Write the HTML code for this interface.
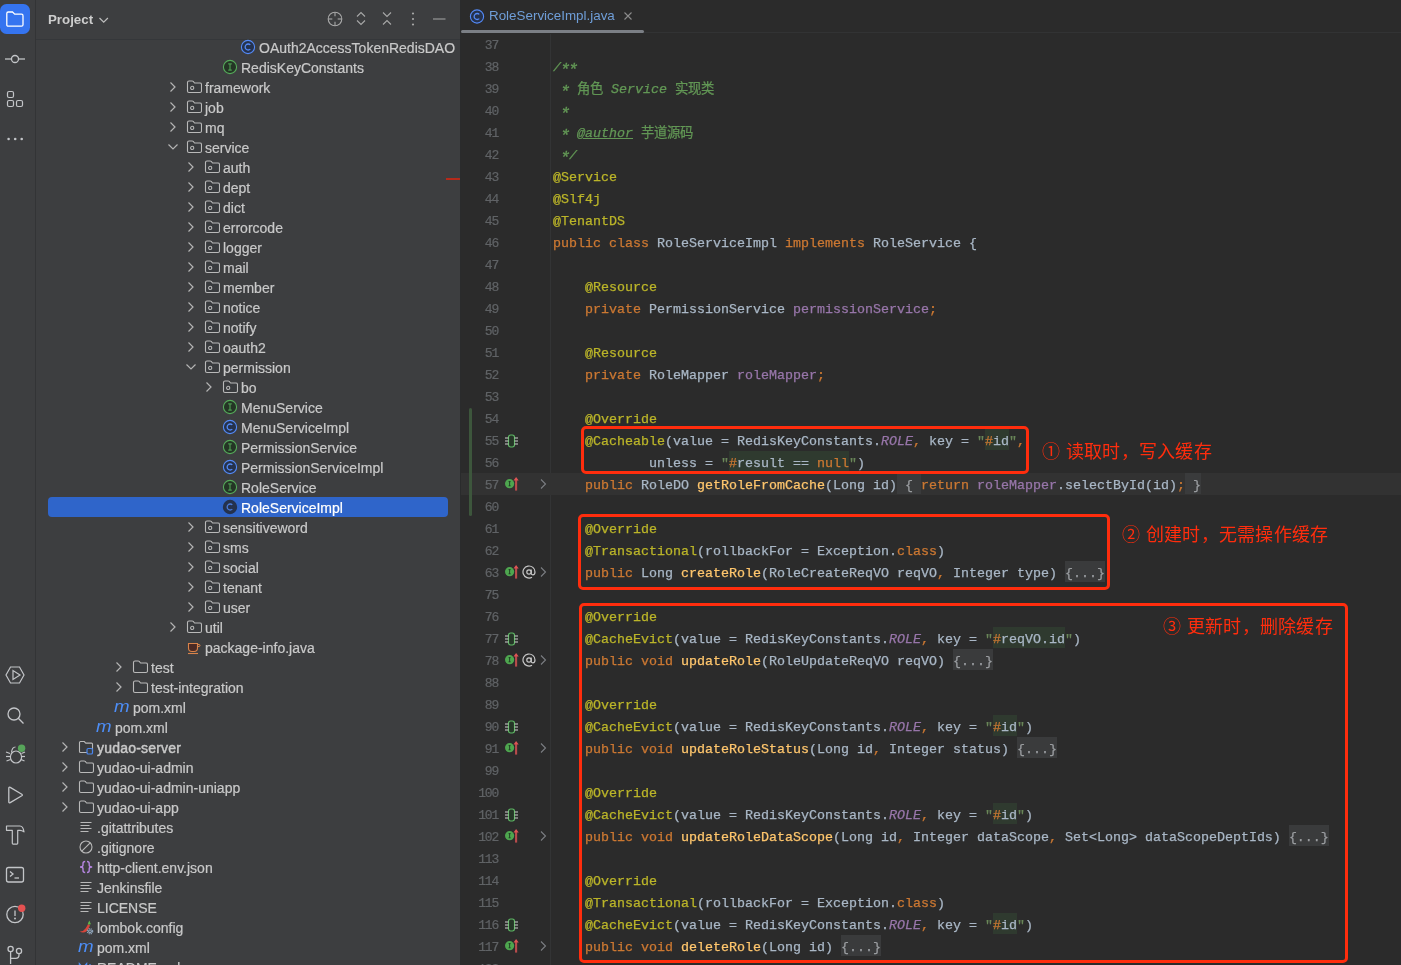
<!DOCTYPE html><html lang="zh-CN"><head><meta charset="utf-8"><style>
*{margin:0;padding:0;box-sizing:border-box}
html,body{width:1401px;height:965px;overflow:hidden;background:#2b2b2b}
body{position:relative;font-family:"Liberation Sans",sans-serif}
#panel,#editor,#strip,.note{will-change:transform}
.abs{position:absolute}
#strip{position:absolute;left:0;top:0;width:35px;height:965px;background:#3d3e40}
#strip .sep{position:absolute;left:35px;top:0;width:1px;height:965px;background:#333436}
#panel{position:absolute;left:36px;top:0;width:424px;height:965px;background:#3d3e40;overflow:hidden}
#psep{position:absolute;left:460px;top:0;width:1px;height:965px;background:#2a2b2c}
#editor{position:absolute;left:461px;top:0;width:940px;height:965px;background:#2b2b2b;overflow:hidden}
.row{position:absolute;left:0;width:424px;height:20px;line-height:20px;font-size:14px;color:#c9c9c9;white-space:nowrap;-webkit-text-stroke:0.2px currentColor}
.row .t{position:absolute;top:0}
.row svg{position:absolute}
.code{position:absolute;left:92px;height:22px;line-height:22px;font-family:"Liberation Mono",monospace;font-size:13.333px;color:#a9b7c6;white-space:pre;-webkit-text-stroke:0.25px currentColor}
.ln{position:absolute;left:0;width:37px;letter-spacing:-1.2px;text-align:right;height:22px;line-height:22px;font-family:"Liberation Mono",monospace;font-size:13px;color:#606366;-webkit-text-stroke:0.2px currentColor}
.kw{color:#cc7832}.an{color:#bbb529}.st{color:#6a8759}.dc{color:#629755;font-style:italic}
.fd{color:#9876aa}.sf{color:#9876aa;font-style:italic}.md{color:#ffc66d}
.inj{background:#2f3a2f;padding:5.45px 0 1.45px}
.cj{font-style:normal!important}
.ast{display:inline-block;transform:translateY(2.6px) scale(1.3)}
.fold{background:#3a3b3c;color:#9a9da0;padding:5.45px 0 1.45px}
.box{position:absolute;border:3.5px solid #ff2d0d;border-radius:5px}
.note{position:absolute;color:#ff2d0d;font-size:18px;letter-spacing:0.3px;line-height:22px;white-space:nowrap}
</style></head><body>

<div id="strip"><div class="sep"></div>
<svg class="abs" style="left:0;top:0" width="35" height="965" viewBox="0 0 35 965">
<rect x="0" y="4" width="30" height="30" rx="6.5" fill="#3574f0"/>
<path d="M6.8 13.5 q0-1.5 1.5-1.5 h4.2 l2.2 2.2 h6.8 q1.5 0 1.5 1.5 v9 q0 1.5-1.5 1.5 h-13.2 q-1.5 0-1.5-1.5z" fill="none" stroke="#fff" stroke-width="1.3"/>
<g fill="none" stroke="#c3c5c8" stroke-width="1.3"><line x1="5" y1="59" x2="11.5" y2="59"/><line x1="18.5" y1="59" x2="25" y2="59"/><circle cx="15" cy="59" r="3.5"/></g>
<g fill="none" stroke="#c3c5c8" stroke-width="1.2"><rect x="7.5" y="91.5" width="6" height="6" rx="1.5"/><rect x="7.5" y="100.5" width="6" height="6" rx="1.5"/><rect x="16.5" y="100.5" width="6" height="6" rx="1.5"/></g>
<g fill="#c3c5c8"><circle cx="8.6" cy="139" r="1.3"/><circle cx="15.2" cy="139" r="1.3"/><circle cx="21.7" cy="139" r="1.3"/></g>
<g fill="none" stroke="#c3c5c8" stroke-width="1.2"><path d="M10.5 667 h9 l4.5 8 l-4.5 8 h-9 l-4.5 -8z"/><path d="M13 670.5 v9 l7 -4.5z"/></g>
<g fill="none" stroke="#c3c5c8" stroke-width="1.3"><circle cx="14" cy="714" r="6"/><line x1="18.3" y1="718.3" x2="23.5" y2="723.5"/></g>
<g fill="none" stroke="#c3c5c8" stroke-width="1.2"><ellipse cx="16" cy="757" rx="5.6" ry="6"/><path d="M11.5 752.5 q0.5 -5.5 4 -5.5"/><line x1="6" y1="752" x2="10" y2="753.5"/><line x1="6" y1="756.5" x2="10.3" y2="756.5"/><line x1="6.5" y1="761" x2="10.5" y2="759.5"/><line x1="25" y1="752" x2="21.5" y2="753.5"/><line x1="25" y1="756.5" x2="21.8" y2="756.5"/><line x1="24.5" y1="761" x2="21" y2="759.5"/></g><circle cx="21.6" cy="748.3" r="3.7" fill="#57a55a"/>
<path d="M8.8 788.2 q0-1.6 1.4-0.8 l11.6 6.8 q1.2 0.8 0 1.6 l-11.6 6.8 q-1.4 0.8 -1.4-0.8z" fill="none" stroke="#c3c5c8" stroke-width="1.3" stroke-linejoin="round"/>
<path d="M6.5 826 h13.5 q3 0 4 5.8 q-2 -1.5 -4 -1.5 h-2.3 v13 q0 0.8 -0.8 0.8 h-3.8 q-0.8 0 -0.8 -0.8 v-13 h-5.8 z" fill="none" stroke="#c3c5c8" stroke-width="1.2" stroke-linejoin="round"/>
<g fill="none" stroke="#c3c5c8" stroke-width="1.3"><rect x="6.5" y="867.5" width="17" height="14.5" rx="2"/><path d="M10 871.5 l3 2.5 l-3 2.5"/><line x1="14.5" y1="878" x2="19" y2="878"/></g>
<g fill="none" stroke="#c3c5c8" stroke-width="1.3"><circle cx="15" cy="914.5" r="8.2"/><line x1="15" y1="910.5" x2="15" y2="916"/></g><circle cx="15" cy="918.5" r="0.95" fill="#c3c5c8"/><circle cx="21.7" cy="908.2" r="3.7" fill="#e55151"/>
<g fill="none" stroke="#c3c5c8" stroke-width="1.3"><circle cx="10.6" cy="949" r="2.6"/><circle cx="19" cy="951" r="2.6"/><line x1="10.6" y1="951.6" x2="10.6" y2="964"/><path d="M19 953.6 v1.5 q0 3.3 -3.3 3.3 h-5.1"/></g>
</svg></div>
<div id="panel">
<div class="abs" style="left:12px;top:0;height:39px;line-height:39px;font-size:13.3px;font-weight:bold;color:#cdcdcd">Project</div>
<svg class="abs" style="left:0;top:0" width="424" height="40" viewBox="36 0 424 40">
<path d="M99.5 18 l4.2 4.2 l4.2 -4.2" fill="none" stroke="#bdbdbd" stroke-width="1.2"/>
<g fill="none" stroke="#a8a8a8" stroke-width="1.1"><circle cx="335" cy="19" r="6.8"/><line x1="335" y1="12.2" x2="335" y2="16.3"/><line x1="335" y1="21.7" x2="335" y2="25.8"/><line x1="328.2" y1="19" x2="332.3" y2="19"/><line x1="337.7" y1="19" x2="341.8" y2="19"/></g>
<g fill="none" stroke="#a8a8a8" stroke-width="1.1"><path d="M357 16.5 l4 -4 l4 4"/><path d="M357 20.5 l4 4 l4 -4"/></g>
<g fill="none" stroke="#a8a8a8" stroke-width="1.1"><path d="M383 12.5 l4 4 l4 -4"/><path d="M383 24.5 l4 -4 l4 4"/></g>
<g fill="#a8a8a8"><circle cx="413" cy="13.5" r="1.1"/><circle cx="413" cy="19" r="1.1"/><circle cx="413" cy="24.5" r="1.1"/></g>
<line x1="433" y1="19" x2="445.5" y2="19" stroke="#a8a8a8" stroke-width="1"/>
</svg>
<div class="abs" style="left:0;top:39px;width:424px;height:1px;background:#35373a"></div>
<div class="abs" style="left:410px;top:178px;width:14px;height:2px;background:#b52a1a"></div>
<svg class="abs" style="left:204px;top:39px" width="16" height="16" viewBox="0 0 16 16"><circle cx="8" cy="8" r="6.6" fill="#25324d" stroke="#548af7" stroke-width="1.1"/><path d="M10.3 5.9 a3 3 0 1 0 0 4.2" fill="none" stroke="#548af7" stroke-width="1.3"/></svg>
<div class="row" style="left:223px;top:37.5px">OAuth2AccessTokenRedisDAO</div>
<svg class="abs" style="left:186px;top:59px" width="16" height="16" viewBox="0 0 16 16"><circle cx="8" cy="8" r="6.6" fill="#243525" stroke="#55aa5a" stroke-width="1.1"/><path d="M6.2 4.9 h3.6 M6.2 11.1 h3.6 M8 4.9 v6.2" fill="none" stroke="#55aa5a" stroke-width="1"/></svg>
<div class="row" style="left:205px;top:57.5px">RedisKeyConstants</div>
<svg class="abs" style="left:131px;top:81px" width="12" height="12" viewBox="0 0 12 12"><path d="M3.5 1.5 l4.5 4.5 l-4.5 4.5" fill="none" stroke="#b4b4b4" stroke-width="1.2"/></svg>
<svg class="abs" style="left:150px;top:79px" width="16" height="16" viewBox="0 0 16 16"><path d="M1.5 3.5 q0-1.5 1.5-1.5 h3.2 q0.6 0 1 0.4 l1.4 1.6 h5.4 q1.5 0 1.5 1.5 v6.5 q0 1.5-1.5 1.5 h-11 q-1.5 0-1.5-1.5z" fill="#393b3e" stroke="#b9b9b9" stroke-width="1.1"/><circle cx="6.2" cy="8.9" r="1.6" fill="none" stroke="#b9b9b9" stroke-width="1.1"/></svg>
<div class="row" style="left:169px;top:77.5px">framework</div>
<svg class="abs" style="left:131px;top:101px" width="12" height="12" viewBox="0 0 12 12"><path d="M3.5 1.5 l4.5 4.5 l-4.5 4.5" fill="none" stroke="#b4b4b4" stroke-width="1.2"/></svg>
<svg class="abs" style="left:150px;top:99px" width="16" height="16" viewBox="0 0 16 16"><path d="M1.5 3.5 q0-1.5 1.5-1.5 h3.2 q0.6 0 1 0.4 l1.4 1.6 h5.4 q1.5 0 1.5 1.5 v6.5 q0 1.5-1.5 1.5 h-11 q-1.5 0-1.5-1.5z" fill="#393b3e" stroke="#b9b9b9" stroke-width="1.1"/><circle cx="6.2" cy="8.9" r="1.6" fill="none" stroke="#b9b9b9" stroke-width="1.1"/></svg>
<div class="row" style="left:169px;top:97.5px">job</div>
<svg class="abs" style="left:131px;top:121px" width="12" height="12" viewBox="0 0 12 12"><path d="M3.5 1.5 l4.5 4.5 l-4.5 4.5" fill="none" stroke="#b4b4b4" stroke-width="1.2"/></svg>
<svg class="abs" style="left:150px;top:119px" width="16" height="16" viewBox="0 0 16 16"><path d="M1.5 3.5 q0-1.5 1.5-1.5 h3.2 q0.6 0 1 0.4 l1.4 1.6 h5.4 q1.5 0 1.5 1.5 v6.5 q0 1.5-1.5 1.5 h-11 q-1.5 0-1.5-1.5z" fill="#393b3e" stroke="#b9b9b9" stroke-width="1.1"/><circle cx="6.2" cy="8.9" r="1.6" fill="none" stroke="#b9b9b9" stroke-width="1.1"/></svg>
<div class="row" style="left:169px;top:117.5px">mq</div>
<svg class="abs" style="left:131px;top:141px" width="12" height="12" viewBox="0 0 12 12"><path d="M1.5 3.5 l4.5 4.5 l4.5 -4.5" fill="none" stroke="#b4b4b4" stroke-width="1.2"/></svg>
<svg class="abs" style="left:150px;top:139px" width="16" height="16" viewBox="0 0 16 16"><path d="M1.5 3.5 q0-1.5 1.5-1.5 h3.2 q0.6 0 1 0.4 l1.4 1.6 h5.4 q1.5 0 1.5 1.5 v6.5 q0 1.5-1.5 1.5 h-11 q-1.5 0-1.5-1.5z" fill="#393b3e" stroke="#b9b9b9" stroke-width="1.1"/><circle cx="6.2" cy="8.9" r="1.6" fill="none" stroke="#b9b9b9" stroke-width="1.1"/></svg>
<div class="row" style="left:169px;top:137.5px">service</div>
<svg class="abs" style="left:149px;top:161px" width="12" height="12" viewBox="0 0 12 12"><path d="M3.5 1.5 l4.5 4.5 l-4.5 4.5" fill="none" stroke="#b4b4b4" stroke-width="1.2"/></svg>
<svg class="abs" style="left:168px;top:159px" width="16" height="16" viewBox="0 0 16 16"><path d="M1.5 3.5 q0-1.5 1.5-1.5 h3.2 q0.6 0 1 0.4 l1.4 1.6 h5.4 q1.5 0 1.5 1.5 v6.5 q0 1.5-1.5 1.5 h-11 q-1.5 0-1.5-1.5z" fill="#393b3e" stroke="#b9b9b9" stroke-width="1.1"/><circle cx="6.2" cy="8.9" r="1.6" fill="none" stroke="#b9b9b9" stroke-width="1.1"/></svg>
<div class="row" style="left:187px;top:157.5px">auth</div>
<svg class="abs" style="left:149px;top:181px" width="12" height="12" viewBox="0 0 12 12"><path d="M3.5 1.5 l4.5 4.5 l-4.5 4.5" fill="none" stroke="#b4b4b4" stroke-width="1.2"/></svg>
<svg class="abs" style="left:168px;top:179px" width="16" height="16" viewBox="0 0 16 16"><path d="M1.5 3.5 q0-1.5 1.5-1.5 h3.2 q0.6 0 1 0.4 l1.4 1.6 h5.4 q1.5 0 1.5 1.5 v6.5 q0 1.5-1.5 1.5 h-11 q-1.5 0-1.5-1.5z" fill="#393b3e" stroke="#b9b9b9" stroke-width="1.1"/><circle cx="6.2" cy="8.9" r="1.6" fill="none" stroke="#b9b9b9" stroke-width="1.1"/></svg>
<div class="row" style="left:187px;top:177.5px">dept</div>
<svg class="abs" style="left:149px;top:201px" width="12" height="12" viewBox="0 0 12 12"><path d="M3.5 1.5 l4.5 4.5 l-4.5 4.5" fill="none" stroke="#b4b4b4" stroke-width="1.2"/></svg>
<svg class="abs" style="left:168px;top:199px" width="16" height="16" viewBox="0 0 16 16"><path d="M1.5 3.5 q0-1.5 1.5-1.5 h3.2 q0.6 0 1 0.4 l1.4 1.6 h5.4 q1.5 0 1.5 1.5 v6.5 q0 1.5-1.5 1.5 h-11 q-1.5 0-1.5-1.5z" fill="#393b3e" stroke="#b9b9b9" stroke-width="1.1"/><circle cx="6.2" cy="8.9" r="1.6" fill="none" stroke="#b9b9b9" stroke-width="1.1"/></svg>
<div class="row" style="left:187px;top:197.5px">dict</div>
<svg class="abs" style="left:149px;top:221px" width="12" height="12" viewBox="0 0 12 12"><path d="M3.5 1.5 l4.5 4.5 l-4.5 4.5" fill="none" stroke="#b4b4b4" stroke-width="1.2"/></svg>
<svg class="abs" style="left:168px;top:219px" width="16" height="16" viewBox="0 0 16 16"><path d="M1.5 3.5 q0-1.5 1.5-1.5 h3.2 q0.6 0 1 0.4 l1.4 1.6 h5.4 q1.5 0 1.5 1.5 v6.5 q0 1.5-1.5 1.5 h-11 q-1.5 0-1.5-1.5z" fill="#393b3e" stroke="#b9b9b9" stroke-width="1.1"/><circle cx="6.2" cy="8.9" r="1.6" fill="none" stroke="#b9b9b9" stroke-width="1.1"/></svg>
<div class="row" style="left:187px;top:217.5px">errorcode</div>
<svg class="abs" style="left:149px;top:241px" width="12" height="12" viewBox="0 0 12 12"><path d="M3.5 1.5 l4.5 4.5 l-4.5 4.5" fill="none" stroke="#b4b4b4" stroke-width="1.2"/></svg>
<svg class="abs" style="left:168px;top:239px" width="16" height="16" viewBox="0 0 16 16"><path d="M1.5 3.5 q0-1.5 1.5-1.5 h3.2 q0.6 0 1 0.4 l1.4 1.6 h5.4 q1.5 0 1.5 1.5 v6.5 q0 1.5-1.5 1.5 h-11 q-1.5 0-1.5-1.5z" fill="#393b3e" stroke="#b9b9b9" stroke-width="1.1"/><circle cx="6.2" cy="8.9" r="1.6" fill="none" stroke="#b9b9b9" stroke-width="1.1"/></svg>
<div class="row" style="left:187px;top:237.5px">logger</div>
<svg class="abs" style="left:149px;top:261px" width="12" height="12" viewBox="0 0 12 12"><path d="M3.5 1.5 l4.5 4.5 l-4.5 4.5" fill="none" stroke="#b4b4b4" stroke-width="1.2"/></svg>
<svg class="abs" style="left:168px;top:259px" width="16" height="16" viewBox="0 0 16 16"><path d="M1.5 3.5 q0-1.5 1.5-1.5 h3.2 q0.6 0 1 0.4 l1.4 1.6 h5.4 q1.5 0 1.5 1.5 v6.5 q0 1.5-1.5 1.5 h-11 q-1.5 0-1.5-1.5z" fill="#393b3e" stroke="#b9b9b9" stroke-width="1.1"/><circle cx="6.2" cy="8.9" r="1.6" fill="none" stroke="#b9b9b9" stroke-width="1.1"/></svg>
<div class="row" style="left:187px;top:257.5px">mail</div>
<svg class="abs" style="left:149px;top:281px" width="12" height="12" viewBox="0 0 12 12"><path d="M3.5 1.5 l4.5 4.5 l-4.5 4.5" fill="none" stroke="#b4b4b4" stroke-width="1.2"/></svg>
<svg class="abs" style="left:168px;top:279px" width="16" height="16" viewBox="0 0 16 16"><path d="M1.5 3.5 q0-1.5 1.5-1.5 h3.2 q0.6 0 1 0.4 l1.4 1.6 h5.4 q1.5 0 1.5 1.5 v6.5 q0 1.5-1.5 1.5 h-11 q-1.5 0-1.5-1.5z" fill="#393b3e" stroke="#b9b9b9" stroke-width="1.1"/><circle cx="6.2" cy="8.9" r="1.6" fill="none" stroke="#b9b9b9" stroke-width="1.1"/></svg>
<div class="row" style="left:187px;top:277.5px">member</div>
<svg class="abs" style="left:149px;top:301px" width="12" height="12" viewBox="0 0 12 12"><path d="M3.5 1.5 l4.5 4.5 l-4.5 4.5" fill="none" stroke="#b4b4b4" stroke-width="1.2"/></svg>
<svg class="abs" style="left:168px;top:299px" width="16" height="16" viewBox="0 0 16 16"><path d="M1.5 3.5 q0-1.5 1.5-1.5 h3.2 q0.6 0 1 0.4 l1.4 1.6 h5.4 q1.5 0 1.5 1.5 v6.5 q0 1.5-1.5 1.5 h-11 q-1.5 0-1.5-1.5z" fill="#393b3e" stroke="#b9b9b9" stroke-width="1.1"/><circle cx="6.2" cy="8.9" r="1.6" fill="none" stroke="#b9b9b9" stroke-width="1.1"/></svg>
<div class="row" style="left:187px;top:297.5px">notice</div>
<svg class="abs" style="left:149px;top:321px" width="12" height="12" viewBox="0 0 12 12"><path d="M3.5 1.5 l4.5 4.5 l-4.5 4.5" fill="none" stroke="#b4b4b4" stroke-width="1.2"/></svg>
<svg class="abs" style="left:168px;top:319px" width="16" height="16" viewBox="0 0 16 16"><path d="M1.5 3.5 q0-1.5 1.5-1.5 h3.2 q0.6 0 1 0.4 l1.4 1.6 h5.4 q1.5 0 1.5 1.5 v6.5 q0 1.5-1.5 1.5 h-11 q-1.5 0-1.5-1.5z" fill="#393b3e" stroke="#b9b9b9" stroke-width="1.1"/><circle cx="6.2" cy="8.9" r="1.6" fill="none" stroke="#b9b9b9" stroke-width="1.1"/></svg>
<div class="row" style="left:187px;top:317.5px">notify</div>
<svg class="abs" style="left:149px;top:341px" width="12" height="12" viewBox="0 0 12 12"><path d="M3.5 1.5 l4.5 4.5 l-4.5 4.5" fill="none" stroke="#b4b4b4" stroke-width="1.2"/></svg>
<svg class="abs" style="left:168px;top:339px" width="16" height="16" viewBox="0 0 16 16"><path d="M1.5 3.5 q0-1.5 1.5-1.5 h3.2 q0.6 0 1 0.4 l1.4 1.6 h5.4 q1.5 0 1.5 1.5 v6.5 q0 1.5-1.5 1.5 h-11 q-1.5 0-1.5-1.5z" fill="#393b3e" stroke="#b9b9b9" stroke-width="1.1"/><circle cx="6.2" cy="8.9" r="1.6" fill="none" stroke="#b9b9b9" stroke-width="1.1"/></svg>
<div class="row" style="left:187px;top:337.5px">oauth2</div>
<svg class="abs" style="left:149px;top:361px" width="12" height="12" viewBox="0 0 12 12"><path d="M1.5 3.5 l4.5 4.5 l4.5 -4.5" fill="none" stroke="#b4b4b4" stroke-width="1.2"/></svg>
<svg class="abs" style="left:168px;top:359px" width="16" height="16" viewBox="0 0 16 16"><path d="M1.5 3.5 q0-1.5 1.5-1.5 h3.2 q0.6 0 1 0.4 l1.4 1.6 h5.4 q1.5 0 1.5 1.5 v6.5 q0 1.5-1.5 1.5 h-11 q-1.5 0-1.5-1.5z" fill="#393b3e" stroke="#b9b9b9" stroke-width="1.1"/><circle cx="6.2" cy="8.9" r="1.6" fill="none" stroke="#b9b9b9" stroke-width="1.1"/></svg>
<div class="row" style="left:187px;top:357.5px">permission</div>
<svg class="abs" style="left:167px;top:381px" width="12" height="12" viewBox="0 0 12 12"><path d="M3.5 1.5 l4.5 4.5 l-4.5 4.5" fill="none" stroke="#b4b4b4" stroke-width="1.2"/></svg>
<svg class="abs" style="left:186px;top:379px" width="16" height="16" viewBox="0 0 16 16"><path d="M1.5 3.5 q0-1.5 1.5-1.5 h3.2 q0.6 0 1 0.4 l1.4 1.6 h5.4 q1.5 0 1.5 1.5 v6.5 q0 1.5-1.5 1.5 h-11 q-1.5 0-1.5-1.5z" fill="#393b3e" stroke="#b9b9b9" stroke-width="1.1"/><circle cx="6.2" cy="8.9" r="1.6" fill="none" stroke="#b9b9b9" stroke-width="1.1"/></svg>
<div class="row" style="left:205px;top:377.5px">bo</div>
<svg class="abs" style="left:186px;top:399px" width="16" height="16" viewBox="0 0 16 16"><circle cx="8" cy="8" r="6.6" fill="#243525" stroke="#55aa5a" stroke-width="1.1"/><path d="M6.2 4.9 h3.6 M6.2 11.1 h3.6 M8 4.9 v6.2" fill="none" stroke="#55aa5a" stroke-width="1"/></svg>
<div class="row" style="left:205px;top:397.5px">MenuService</div>
<svg class="abs" style="left:186px;top:419px" width="16" height="16" viewBox="0 0 16 16"><circle cx="8" cy="8" r="6.6" fill="#25324d" stroke="#548af7" stroke-width="1.1"/><path d="M10.3 5.9 a3 3 0 1 0 0 4.2" fill="none" stroke="#548af7" stroke-width="1.3"/></svg>
<div class="row" style="left:205px;top:417.5px">MenuServiceImpl</div>
<svg class="abs" style="left:186px;top:439px" width="16" height="16" viewBox="0 0 16 16"><circle cx="8" cy="8" r="6.6" fill="#243525" stroke="#55aa5a" stroke-width="1.1"/><path d="M6.2 4.9 h3.6 M6.2 11.1 h3.6 M8 4.9 v6.2" fill="none" stroke="#55aa5a" stroke-width="1"/></svg>
<div class="row" style="left:205px;top:437.5px">PermissionService</div>
<svg class="abs" style="left:186px;top:459px" width="16" height="16" viewBox="0 0 16 16"><circle cx="8" cy="8" r="6.6" fill="#25324d" stroke="#548af7" stroke-width="1.1"/><path d="M10.3 5.9 a3 3 0 1 0 0 4.2" fill="none" stroke="#548af7" stroke-width="1.3"/></svg>
<div class="row" style="left:205px;top:457.5px">PermissionServiceImpl</div>
<svg class="abs" style="left:186px;top:479px" width="16" height="16" viewBox="0 0 16 16"><circle cx="8" cy="8" r="6.6" fill="#243525" stroke="#55aa5a" stroke-width="1.1"/><path d="M6.2 4.9 h3.6 M6.2 11.1 h3.6 M8 4.9 v6.2" fill="none" stroke="#55aa5a" stroke-width="1"/></svg>
<div class="row" style="left:205px;top:477.5px">RoleService</div>
<div class="abs" style="left:12px;top:497px;width:400px;height:20px;background:#2f65ca;border-radius:4px"></div>
<svg class="abs" style="left:186px;top:499px" width="16" height="16" viewBox="0 0 16 16"><circle cx="8" cy="8" r="6.6" fill="#25324d" stroke="#25324d" stroke-width="1.1"/><path d="M10.3 5.9 a3 3 0 1 0 0 4.2" fill="none" stroke="#4a7ad8" stroke-width="1.3"/></svg>
<div class="row" style="left:205px;top:497.5px;color:#ffffff">RoleServiceImpl</div>
<svg class="abs" style="left:149px;top:521px" width="12" height="12" viewBox="0 0 12 12"><path d="M3.5 1.5 l4.5 4.5 l-4.5 4.5" fill="none" stroke="#b4b4b4" stroke-width="1.2"/></svg>
<svg class="abs" style="left:168px;top:519px" width="16" height="16" viewBox="0 0 16 16"><path d="M1.5 3.5 q0-1.5 1.5-1.5 h3.2 q0.6 0 1 0.4 l1.4 1.6 h5.4 q1.5 0 1.5 1.5 v6.5 q0 1.5-1.5 1.5 h-11 q-1.5 0-1.5-1.5z" fill="#393b3e" stroke="#b9b9b9" stroke-width="1.1"/><circle cx="6.2" cy="8.9" r="1.6" fill="none" stroke="#b9b9b9" stroke-width="1.1"/></svg>
<div class="row" style="left:187px;top:517.5px">sensitiveword</div>
<svg class="abs" style="left:149px;top:541px" width="12" height="12" viewBox="0 0 12 12"><path d="M3.5 1.5 l4.5 4.5 l-4.5 4.5" fill="none" stroke="#b4b4b4" stroke-width="1.2"/></svg>
<svg class="abs" style="left:168px;top:539px" width="16" height="16" viewBox="0 0 16 16"><path d="M1.5 3.5 q0-1.5 1.5-1.5 h3.2 q0.6 0 1 0.4 l1.4 1.6 h5.4 q1.5 0 1.5 1.5 v6.5 q0 1.5-1.5 1.5 h-11 q-1.5 0-1.5-1.5z" fill="#393b3e" stroke="#b9b9b9" stroke-width="1.1"/><circle cx="6.2" cy="8.9" r="1.6" fill="none" stroke="#b9b9b9" stroke-width="1.1"/></svg>
<div class="row" style="left:187px;top:537.5px">sms</div>
<svg class="abs" style="left:149px;top:561px" width="12" height="12" viewBox="0 0 12 12"><path d="M3.5 1.5 l4.5 4.5 l-4.5 4.5" fill="none" stroke="#b4b4b4" stroke-width="1.2"/></svg>
<svg class="abs" style="left:168px;top:559px" width="16" height="16" viewBox="0 0 16 16"><path d="M1.5 3.5 q0-1.5 1.5-1.5 h3.2 q0.6 0 1 0.4 l1.4 1.6 h5.4 q1.5 0 1.5 1.5 v6.5 q0 1.5-1.5 1.5 h-11 q-1.5 0-1.5-1.5z" fill="#393b3e" stroke="#b9b9b9" stroke-width="1.1"/><circle cx="6.2" cy="8.9" r="1.6" fill="none" stroke="#b9b9b9" stroke-width="1.1"/></svg>
<div class="row" style="left:187px;top:557.5px">social</div>
<svg class="abs" style="left:149px;top:581px" width="12" height="12" viewBox="0 0 12 12"><path d="M3.5 1.5 l4.5 4.5 l-4.5 4.5" fill="none" stroke="#b4b4b4" stroke-width="1.2"/></svg>
<svg class="abs" style="left:168px;top:579px" width="16" height="16" viewBox="0 0 16 16"><path d="M1.5 3.5 q0-1.5 1.5-1.5 h3.2 q0.6 0 1 0.4 l1.4 1.6 h5.4 q1.5 0 1.5 1.5 v6.5 q0 1.5-1.5 1.5 h-11 q-1.5 0-1.5-1.5z" fill="#393b3e" stroke="#b9b9b9" stroke-width="1.1"/><circle cx="6.2" cy="8.9" r="1.6" fill="none" stroke="#b9b9b9" stroke-width="1.1"/></svg>
<div class="row" style="left:187px;top:577.5px">tenant</div>
<svg class="abs" style="left:149px;top:601px" width="12" height="12" viewBox="0 0 12 12"><path d="M3.5 1.5 l4.5 4.5 l-4.5 4.5" fill="none" stroke="#b4b4b4" stroke-width="1.2"/></svg>
<svg class="abs" style="left:168px;top:599px" width="16" height="16" viewBox="0 0 16 16"><path d="M1.5 3.5 q0-1.5 1.5-1.5 h3.2 q0.6 0 1 0.4 l1.4 1.6 h5.4 q1.5 0 1.5 1.5 v6.5 q0 1.5-1.5 1.5 h-11 q-1.5 0-1.5-1.5z" fill="#393b3e" stroke="#b9b9b9" stroke-width="1.1"/><circle cx="6.2" cy="8.9" r="1.6" fill="none" stroke="#b9b9b9" stroke-width="1.1"/></svg>
<div class="row" style="left:187px;top:597.5px">user</div>
<svg class="abs" style="left:131px;top:621px" width="12" height="12" viewBox="0 0 12 12"><path d="M3.5 1.5 l4.5 4.5 l-4.5 4.5" fill="none" stroke="#b4b4b4" stroke-width="1.2"/></svg>
<svg class="abs" style="left:150px;top:619px" width="16" height="16" viewBox="0 0 16 16"><path d="M1.5 3.5 q0-1.5 1.5-1.5 h3.2 q0.6 0 1 0.4 l1.4 1.6 h5.4 q1.5 0 1.5 1.5 v6.5 q0 1.5-1.5 1.5 h-11 q-1.5 0-1.5-1.5z" fill="#393b3e" stroke="#b9b9b9" stroke-width="1.1"/><circle cx="6.2" cy="8.9" r="1.6" fill="none" stroke="#b9b9b9" stroke-width="1.1"/></svg>
<div class="row" style="left:169px;top:617.5px">util</div>
<svg class="abs" style="left:150px;top:639px" width="16" height="16" viewBox="0 0 16 16"><path d="M2.5 4.5 h9 v4.5 q0 3.5-3.5 3.5 h-2 q-3.5 0-3.5-3.5z" fill="#4b2a24" stroke="#d9834a" stroke-width="1.1"/><path d="M11.5 5.5 h1.5 q1 0 1 1 q0 1-1 1 h-1.5" fill="none" stroke="#d9834a" stroke-width="1"/><line x1="2" y1="14.5" x2="12" y2="14.5" stroke="#d9834a" stroke-width="1.1"/></svg>
<div class="row" style="left:169px;top:637.5px">package-info.java</div>
<svg class="abs" style="left:77px;top:661px" width="12" height="12" viewBox="0 0 12 12"><path d="M3.5 1.5 l4.5 4.5 l-4.5 4.5" fill="none" stroke="#b4b4b4" stroke-width="1.2"/></svg>
<svg class="abs" style="left:96px;top:659px" width="16" height="16" viewBox="0 0 16 16"><path d="M1.5 3.5 q0-1.5 1.5-1.5 h3.2 q0.6 0 1 0.4 l1.4 1.6 h5.4 q1.5 0 1.5 1.5 v6.5 q0 1.5-1.5 1.5 h-11 q-1.5 0-1.5-1.5z" fill="#393b3e" stroke="#b9b9b9" stroke-width="1.1"/></svg>
<div class="row" style="left:115px;top:657.5px">test</div>
<svg class="abs" style="left:77px;top:681px" width="12" height="12" viewBox="0 0 12 12"><path d="M3.5 1.5 l4.5 4.5 l-4.5 4.5" fill="none" stroke="#b4b4b4" stroke-width="1.2"/></svg>
<svg class="abs" style="left:96px;top:679px" width="16" height="16" viewBox="0 0 16 16"><path d="M1.5 3.5 q0-1.5 1.5-1.5 h3.2 q0.6 0 1 0.4 l1.4 1.6 h5.4 q1.5 0 1.5 1.5 v6.5 q0 1.5-1.5 1.5 h-11 q-1.5 0-1.5-1.5z" fill="#393b3e" stroke="#b9b9b9" stroke-width="1.1"/></svg>
<div class="row" style="left:115px;top:677.5px">test-integration</div>
<svg class="abs" style="left:78px;top:699px" width="16" height="16" viewBox="0 0 16 16"><text x="0" y="12.8" font-family="Liberation Sans" font-style="italic" font-size="17" fill="#4d8ef7" transform="scale(1.1 1)">m</text></svg>
<div class="row" style="left:97px;top:697.5px">pom.xml</div>
<svg class="abs" style="left:60px;top:719px" width="16" height="16" viewBox="0 0 16 16"><text x="0" y="12.8" font-family="Liberation Sans" font-style="italic" font-size="17" fill="#4d8ef7" transform="scale(1.1 1)">m</text></svg>
<div class="row" style="left:79px;top:717.5px">pom.xml</div>
<svg class="abs" style="left:23px;top:741px" width="12" height="12" viewBox="0 0 12 12"><path d="M3.5 1.5 l4.5 4.5 l-4.5 4.5" fill="none" stroke="#b4b4b4" stroke-width="1.2"/></svg>
<svg class="abs" style="left:42px;top:739px" width="16" height="16" viewBox="0 0 16 16"><path d="M1.5 3.5 q0-1 1-1 h3.8 l1.5 1.6 h5.7 q1 0 1 1 v7.4 q0 1-1 1 h-11 q-1 0-1-1z" fill="#393b3e" stroke="#b9b9b9" stroke-width="1.1"/><rect x="9" y="9.5" width="5.5" height="5.5" rx="1.3" fill="#3c3f41" stroke="#4a86f0" stroke-width="1.2"/></svg>
<div class="row" style="left:61px;top:737.5px;-webkit-text-stroke:0.45px currentColor;letter-spacing:0.2px">yudao-server</div>
<svg class="abs" style="left:23px;top:761px" width="12" height="12" viewBox="0 0 12 12"><path d="M3.5 1.5 l4.5 4.5 l-4.5 4.5" fill="none" stroke="#b4b4b4" stroke-width="1.2"/></svg>
<svg class="abs" style="left:42px;top:759px" width="16" height="16" viewBox="0 0 16 16"><path d="M1.5 3.5 q0-1.5 1.5-1.5 h3.2 q0.6 0 1 0.4 l1.4 1.6 h5.4 q1.5 0 1.5 1.5 v6.5 q0 1.5-1.5 1.5 h-11 q-1.5 0-1.5-1.5z" fill="#393b3e" stroke="#b9b9b9" stroke-width="1.1"/></svg>
<div class="row" style="left:61px;top:757.5px">yudao-ui-admin</div>
<svg class="abs" style="left:23px;top:781px" width="12" height="12" viewBox="0 0 12 12"><path d="M3.5 1.5 l4.5 4.5 l-4.5 4.5" fill="none" stroke="#b4b4b4" stroke-width="1.2"/></svg>
<svg class="abs" style="left:42px;top:779px" width="16" height="16" viewBox="0 0 16 16"><path d="M1.5 3.5 q0-1.5 1.5-1.5 h3.2 q0.6 0 1 0.4 l1.4 1.6 h5.4 q1.5 0 1.5 1.5 v6.5 q0 1.5-1.5 1.5 h-11 q-1.5 0-1.5-1.5z" fill="#393b3e" stroke="#b9b9b9" stroke-width="1.1"/></svg>
<div class="row" style="left:61px;top:777.5px">yudao-ui-admin-uniapp</div>
<svg class="abs" style="left:23px;top:801px" width="12" height="12" viewBox="0 0 12 12"><path d="M3.5 1.5 l4.5 4.5 l-4.5 4.5" fill="none" stroke="#b4b4b4" stroke-width="1.2"/></svg>
<svg class="abs" style="left:42px;top:799px" width="16" height="16" viewBox="0 0 16 16"><path d="M1.5 3.5 q0-1.5 1.5-1.5 h3.2 q0.6 0 1 0.4 l1.4 1.6 h5.4 q1.5 0 1.5 1.5 v6.5 q0 1.5-1.5 1.5 h-11 q-1.5 0-1.5-1.5z" fill="#393b3e" stroke="#b9b9b9" stroke-width="1.1"/></svg>
<div class="row" style="left:61px;top:797.5px">yudao-ui-app</div>
<svg class="abs" style="left:42px;top:819px" width="16" height="16" viewBox="0 0 16 16"><path d="M2.5 3.5 h11 M2.5 6.5 h9 M2.5 9.5 h11 M2.5 12.5 h8" stroke="#b9b9b9" stroke-width="1.1"/></svg>
<div class="row" style="left:61px;top:817.5px">.gitattributes</div>
<svg class="abs" style="left:42px;top:839px" width="16" height="16" viewBox="0 0 16 16"><circle cx="8" cy="8" r="6" fill="none" stroke="#b9b9b9" stroke-width="1.1"/><line x1="3.8" y1="12.2" x2="12.2" y2="3.8" stroke="#b9b9b9" stroke-width="1.1"/></svg>
<div class="row" style="left:61px;top:837.5px">.gitignore</div>
<svg class="abs" style="left:42px;top:859px" width="16" height="16" viewBox="0 0 16 16"><path d="M7.2 2.5 q-2.2 0 -2.2 2 v1.8 q0 1.7 -3 1.7 q3 0 3 1.7 v1.8 q0 2 2.2 2 M9 2.5 q2.2 0 2.2 2 v1.8 q0 1.7 3 1.7 q-3 0 -3 1.7 v1.8 q0 2 -2.2 2" fill="none" stroke="#b585e0" stroke-width="1.4"/></svg>
<div class="row" style="left:61px;top:857.5px">http-client.env.json</div>
<svg class="abs" style="left:42px;top:879px" width="16" height="16" viewBox="0 0 16 16"><path d="M2.5 3.5 h11 M2.5 6.5 h9 M2.5 9.5 h11 M2.5 12.5 h8" stroke="#b9b9b9" stroke-width="1.1"/></svg>
<div class="row" style="left:61px;top:877.5px">Jenkinsfile</div>
<svg class="abs" style="left:42px;top:899px" width="16" height="16" viewBox="0 0 16 16"><path d="M2.5 3.5 h11 M2.5 6.5 h9 M2.5 9.5 h11 M2.5 12.5 h8" stroke="#b9b9b9" stroke-width="1.1"/></svg>
<div class="row" style="left:61px;top:897.5px">LICENSE</div>
<svg class="abs" style="left:42px;top:919px" width="16" height="16" viewBox="0 0 16 16"><path d="M1.5 12.5 q3.5 0.5 6 -3 q1.5 -2 2.5 -4.5 l2 1.2 q-1 3.5 -3.5 6 q-3 2.5 -7 0.3z" fill="#d9453a"/><path d="M9.8 5 q0.5 -2.5 1.8 -3.5 q0.3 2 1.3 3.5 q-1.5 1 -3.1 0z" fill="#5fb44a"/><circle cx="12" cy="12.3" r="2.6" fill="none" stroke="#8fa3b8" stroke-width="1.3" stroke-dasharray="1.2 0.9"/><circle cx="12" cy="12.3" r="1.9" fill="#8fa3b8"/><circle cx="12" cy="12.3" r="0.8" fill="#3c3f41"/></svg>
<div class="row" style="left:61px;top:917.5px">lombok.config</div>
<svg class="abs" style="left:42px;top:939px" width="16" height="16" viewBox="0 0 16 16"><text x="0" y="12.8" font-family="Liberation Sans" font-style="italic" font-size="17" fill="#4d8ef7" transform="scale(1.1 1)">m</text></svg>
<div class="row" style="left:61px;top:937.5px">pom.xml</div>
<svg class="abs" style="left:42px;top:959px" width="16" height="16" viewBox="0 0 16 16"><path d="M1.5 13 v-8 l3.5 4 l3.5 -4 v8" fill="none" stroke="#4d8ef7" stroke-width="1.5"/><path d="M12 5 v7 M9.8 9.8 l2.2 2.4 l2.2 -2.4" fill="none" stroke="#4d8ef7" stroke-width="1.3"/></svg>
<div class="row" style="left:61px;top:957.5px">README.md</div>
</div>
<div id="psep"></div>
<div id="editor">
<svg class="abs" style="left:0;top:0" width="200" height="40" viewBox="461 0 200 40">
<circle cx="477" cy="16.5" r="6.6" fill="#25324d" stroke="#548af7" stroke-width="1.1"/><path d="M479.3 14.4 a3 3 0 1 0 0 4.2" fill="none" stroke="#548af7" stroke-width="1.3"/>
<path d="M624.5 12.5 l7 7 M631.5 12.5 l-7 7" stroke="#8c8c8c" stroke-width="1.1"/>
</svg>
<div class="abs" style="left:28px;top:5px;height:22px;line-height:22px;font-size:13.4px;color:#6f9ed8;white-space:nowrap">RoleServiceImpl.java</div>
<div class="abs" style="left:0;top:32px;width:940px;height:1px;background:#323334"></div>
<div class="abs" style="left:0;top:30px;width:183px;height:3px;border-radius:2px;background:#7b7f85"></div>
<div class="abs" style="left:89px;top:34px;width:1px;height:931px;background:#333435"></div>
<div class="abs" style="left:0;top:473px;width:940px;height:22px;background:#323232"></div>
<div class="abs" style="left:7.5px;top:408px;width:3px;height:108px;border-radius:1.5px;background:#3d563c"></div>
<div class="ln" style="top:35px">37</div>
<div class="ln" style="top:57px">38</div>
<div class="code" style="top:57px"><span class="dc">/<span class="ast">*</span><span class="ast">*</span></span></div>
<div class="ln" style="top:79px">39</div>
<div class="code" style="top:79px"><span class="dc"> <span class="ast">*</span> </span><span class="dc cj">角色</span><span class="dc"> Service </span><span class="dc cj">实现类</span></div>
<div class="ln" style="top:101px">40</div>
<div class="code" style="top:101px"><span class="dc"> <span class="ast">*</span></span></div>
<div class="ln" style="top:123px">41</div>
<div class="code" style="top:123px"><span class="dc"> <span class="ast">*</span> </span><span class="dc" style="text-decoration:underline">@author</span><span class="dc"> </span><span class="dc cj">芋道源码</span></div>
<div class="ln" style="top:145px">42</div>
<div class="code" style="top:145px"><span class="dc"> <span class="ast">*</span>/</span></div>
<div class="ln" style="top:167px">43</div>
<div class="code" style="top:167px"><span class="an">@Service</span></div>
<div class="ln" style="top:189px">44</div>
<div class="code" style="top:189px"><span class="an">@Slf4j</span></div>
<div class="ln" style="top:211px">45</div>
<div class="code" style="top:211px"><span class="an">@TenantDS</span></div>
<div class="ln" style="top:233px">46</div>
<div class="code" style="top:233px"><span class="kw">public class </span>RoleServiceImpl <span class="kw">implements </span>RoleService {</div>
<div class="ln" style="top:255px">47</div>
<div class="ln" style="top:277px">48</div>
<div class="code" style="top:277px">    <span class="an">@Resource</span></div>
<div class="ln" style="top:299px">49</div>
<div class="code" style="top:299px">    <span class="kw">private </span>PermissionService <span class="fd">permissionService</span><span class="kw">;</span></div>
<div class="ln" style="top:321px">50</div>
<div class="ln" style="top:343px">51</div>
<div class="code" style="top:343px">    <span class="an">@Resource</span></div>
<div class="ln" style="top:365px">52</div>
<div class="code" style="top:365px">    <span class="kw">private </span>RoleMapper <span class="fd">roleMapper</span><span class="kw">;</span></div>
<div class="ln" style="top:387px">53</div>
<div class="ln" style="top:409px">54</div>
<div class="code" style="top:409px">    <span class="an">@Override</span></div>
<div class="ln" style="top:431px">55</div>
<div class="code" style="top:431px">    <span class="an">@Cacheable</span>(value = RedisKeyConstants.<span class="sf">ROLE</span><span class="kw">,</span> key = <span class="st">&quot;</span><span class="inj"><span class="kw">#</span>id</span><span class="st">&quot;</span><span class="kw">,</span></div>
<div class="ln" style="top:453px">56</div>
<div class="code" style="top:453px">            unless = <span class="st">&quot;</span><span class="inj"><span class="kw">#</span>result == <span class="kw">null</span></span><span class="st">&quot;</span>)</div>
<div class="ln" style="top:475px">57</div>
<div class="code" style="top:475px">    <span class="kw">public </span>RoleDO <span class="md">getRoleFromCache</span>(Long id)<span class="fold"> { </span><span class="kw">return </span><span class="fd">roleMapper</span>.selectById(id)<span class="kw">;</span><span class="fold"> }</span></div>
<div class="ln" style="top:497px">60</div>
<div class="ln" style="top:519px">61</div>
<div class="code" style="top:519px">    <span class="an">@Override</span></div>
<div class="ln" style="top:541px">62</div>
<div class="code" style="top:541px">    <span class="an">@Transactional</span>(rollbackFor = Exception.<span class="kw">class</span>)</div>
<div class="ln" style="top:563px">63</div>
<div class="code" style="top:563px">    <span class="kw">public </span>Long <span class="md">createRole</span>(RoleCreateReqVO reqVO<span class="kw">,</span> Integer type) <span class="fold">{...}</span></div>
<div class="ln" style="top:585px">75</div>
<div class="ln" style="top:607px">76</div>
<div class="code" style="top:607px">    <span class="an">@Override</span></div>
<div class="ln" style="top:629px">77</div>
<div class="code" style="top:629px">    <span class="an">@CacheEvict</span>(value = RedisKeyConstants.<span class="sf">ROLE</span><span class="kw">,</span> key = <span class="st">&quot;</span><span class="inj"><span class="kw">#</span>reqVO.id</span><span class="st">&quot;</span>)</div>
<div class="ln" style="top:651px">78</div>
<div class="code" style="top:651px">    <span class="kw">public void </span><span class="md">updateRole</span>(RoleUpdateReqVO reqVO) <span class="fold">{...}</span></div>
<div class="ln" style="top:673px">88</div>
<div class="ln" style="top:695px">89</div>
<div class="code" style="top:695px">    <span class="an">@Override</span></div>
<div class="ln" style="top:717px">90</div>
<div class="code" style="top:717px">    <span class="an">@CacheEvict</span>(value = RedisKeyConstants.<span class="sf">ROLE</span><span class="kw">,</span> key = <span class="st">&quot;</span><span class="inj"><span class="kw">#</span>id</span><span class="st">&quot;</span>)</div>
<div class="ln" style="top:739px">91</div>
<div class="code" style="top:739px">    <span class="kw">public void </span><span class="md">updateRoleStatus</span>(Long id<span class="kw">,</span> Integer status) <span class="fold">{...}</span></div>
<div class="ln" style="top:761px">99</div>
<div class="ln" style="top:783px">100</div>
<div class="code" style="top:783px">    <span class="an">@Override</span></div>
<div class="ln" style="top:805px">101</div>
<div class="code" style="top:805px">    <span class="an">@CacheEvict</span>(value = RedisKeyConstants.<span class="sf">ROLE</span><span class="kw">,</span> key = <span class="st">&quot;</span><span class="inj"><span class="kw">#</span>id</span><span class="st">&quot;</span>)</div>
<div class="ln" style="top:827px">102</div>
<div class="code" style="top:827px">    <span class="kw">public void </span><span class="md">updateRoleDataScope</span>(Long id<span class="kw">,</span> Integer dataScope<span class="kw">,</span> Set&lt;Long&gt; dataScopeDeptIds) <span class="fold">{...}</span></div>
<div class="ln" style="top:849px">113</div>
<div class="ln" style="top:871px">114</div>
<div class="code" style="top:871px">    <span class="an">@Override</span></div>
<div class="ln" style="top:893px">115</div>
<div class="code" style="top:893px">    <span class="an">@Transactional</span>(rollbackFor = Exception.<span class="kw">class</span>)</div>
<div class="ln" style="top:915px">116</div>
<div class="code" style="top:915px">    <span class="an">@CacheEvict</span>(value = RedisKeyConstants.<span class="sf">ROLE</span><span class="kw">,</span> key = <span class="st">&quot;</span><span class="inj"><span class="kw">#</span>id</span><span class="st">&quot;</span>)</div>
<div class="ln" style="top:937px">117</div>
<div class="code" style="top:937px">    <span class="kw">public void </span><span class="md">deleteRole</span>(Long id) <span class="fold">{...}</span></div>
<div class="ln" style="top:959px">123</div>
<svg class="abs" style="left:42px;top:433px" width="16" height="16" viewBox="0 0 16 16"><rect x="5.5" y="2" width="6" height="12" rx="2.2" fill="#253627" stroke="#5fb865" stroke-width="1.1"/><path d="M2 5 h3.5 M2 8 h3.5 M2 11 h3.5 M11.5 5 h3.5 M11.5 8 h3.5 M11.5 11 h3.5" stroke="#cfcfcf" stroke-width="1.1"/></svg>
<svg class="abs" style="left:42px;top:631px" width="16" height="16" viewBox="0 0 16 16"><rect x="5.5" y="2" width="6" height="12" rx="2.2" fill="#253627" stroke="#5fb865" stroke-width="1.1"/><path d="M2 5 h3.5 M2 8 h3.5 M2 11 h3.5 M11.5 5 h3.5 M11.5 8 h3.5 M11.5 11 h3.5" stroke="#cfcfcf" stroke-width="1.1"/></svg>
<svg class="abs" style="left:42px;top:719px" width="16" height="16" viewBox="0 0 16 16"><rect x="5.5" y="2" width="6" height="12" rx="2.2" fill="#253627" stroke="#5fb865" stroke-width="1.1"/><path d="M2 5 h3.5 M2 8 h3.5 M2 11 h3.5 M11.5 5 h3.5 M11.5 8 h3.5 M11.5 11 h3.5" stroke="#cfcfcf" stroke-width="1.1"/></svg>
<svg class="abs" style="left:42px;top:807px" width="16" height="16" viewBox="0 0 16 16"><rect x="5.5" y="2" width="6" height="12" rx="2.2" fill="#253627" stroke="#5fb865" stroke-width="1.1"/><path d="M2 5 h3.5 M2 8 h3.5 M2 11 h3.5 M11.5 5 h3.5 M11.5 8 h3.5 M11.5 11 h3.5" stroke="#cfcfcf" stroke-width="1.1"/></svg>
<svg class="abs" style="left:42px;top:917px" width="16" height="16" viewBox="0 0 16 16"><rect x="5.5" y="2" width="6" height="12" rx="2.2" fill="#253627" stroke="#5fb865" stroke-width="1.1"/><path d="M2 5 h3.5 M2 8 h3.5 M2 11 h3.5 M11.5 5 h3.5 M11.5 8 h3.5 M11.5 11 h3.5" stroke="#cfcfcf" stroke-width="1.1"/></svg>
<svg class="abs" style="left:40px;top:475px" width="20" height="20" viewBox="0 0 20 20"><circle cx="8.6" cy="8.7" r="4.6" fill="#4ea64f"/><path d="M8.6 6.6 v4.2 M7.6 6.6 h2 M7.6 10.8 h2" stroke="#1d3a20" stroke-width="0.9"/><path d="M15.1 15.6 v-10.5" stroke="#b94c4c" stroke-width="2.1"/><path d="M12.5 5.6 l2.6 -3.6 l2.6 3.6z" fill="#e05555"/></svg>
<svg class="abs" style="left:77px;top:478px" width="10" height="12" viewBox="0 0 10 12"><path d="M3 1.5 l4.5 4.5 l-4.5 4.5" fill="none" stroke="#7b7e82" stroke-width="1.1"/></svg>
<svg class="abs" style="left:40px;top:563px" width="20" height="20" viewBox="0 0 20 20"><circle cx="8.6" cy="8.7" r="4.6" fill="#4ea64f"/><path d="M8.6 6.6 v4.2 M7.6 6.6 h2 M7.6 10.8 h2" stroke="#1d3a20" stroke-width="0.9"/><path d="M15.1 15.6 v-10.5" stroke="#b94c4c" stroke-width="2.1"/><path d="M12.5 5.6 l2.6 -3.6 l2.6 3.6z" fill="#e05555"/></svg>
<svg class="abs" style="left:77px;top:566px" width="10" height="12" viewBox="0 0 10 12"><path d="M3 1.5 l4.5 4.5 l-4.5 4.5" fill="none" stroke="#7b7e82" stroke-width="1.1"/></svg>
<svg class="abs" style="left:40px;top:651px" width="20" height="20" viewBox="0 0 20 20"><circle cx="8.6" cy="8.7" r="4.6" fill="#4ea64f"/><path d="M8.6 6.6 v4.2 M7.6 6.6 h2 M7.6 10.8 h2" stroke="#1d3a20" stroke-width="0.9"/><path d="M15.1 15.6 v-10.5" stroke="#b94c4c" stroke-width="2.1"/><path d="M12.5 5.6 l2.6 -3.6 l2.6 3.6z" fill="#e05555"/></svg>
<svg class="abs" style="left:77px;top:654px" width="10" height="12" viewBox="0 0 10 12"><path d="M3 1.5 l4.5 4.5 l-4.5 4.5" fill="none" stroke="#7b7e82" stroke-width="1.1"/></svg>
<svg class="abs" style="left:40px;top:739px" width="20" height="20" viewBox="0 0 20 20"><circle cx="8.6" cy="8.7" r="4.6" fill="#4ea64f"/><path d="M8.6 6.6 v4.2 M7.6 6.6 h2 M7.6 10.8 h2" stroke="#1d3a20" stroke-width="0.9"/><path d="M15.1 15.6 v-10.5" stroke="#b94c4c" stroke-width="2.1"/><path d="M12.5 5.6 l2.6 -3.6 l2.6 3.6z" fill="#e05555"/></svg>
<svg class="abs" style="left:77px;top:742px" width="10" height="12" viewBox="0 0 10 12"><path d="M3 1.5 l4.5 4.5 l-4.5 4.5" fill="none" stroke="#7b7e82" stroke-width="1.1"/></svg>
<svg class="abs" style="left:40px;top:827px" width="20" height="20" viewBox="0 0 20 20"><circle cx="8.6" cy="8.7" r="4.6" fill="#4ea64f"/><path d="M8.6 6.6 v4.2 M7.6 6.6 h2 M7.6 10.8 h2" stroke="#1d3a20" stroke-width="0.9"/><path d="M15.1 15.6 v-10.5" stroke="#b94c4c" stroke-width="2.1"/><path d="M12.5 5.6 l2.6 -3.6 l2.6 3.6z" fill="#e05555"/></svg>
<svg class="abs" style="left:77px;top:830px" width="10" height="12" viewBox="0 0 10 12"><path d="M3 1.5 l4.5 4.5 l-4.5 4.5" fill="none" stroke="#7b7e82" stroke-width="1.1"/></svg>
<svg class="abs" style="left:40px;top:937px" width="20" height="20" viewBox="0 0 20 20"><circle cx="8.6" cy="8.7" r="4.6" fill="#4ea64f"/><path d="M8.6 6.6 v4.2 M7.6 6.6 h2 M7.6 10.8 h2" stroke="#1d3a20" stroke-width="0.9"/><path d="M15.1 15.6 v-10.5" stroke="#b94c4c" stroke-width="2.1"/><path d="M12.5 5.6 l2.6 -3.6 l2.6 3.6z" fill="#e05555"/></svg>
<svg class="abs" style="left:77px;top:940px" width="10" height="12" viewBox="0 0 10 12"><path d="M3 1.5 l4.5 4.5 l-4.5 4.5" fill="none" stroke="#7b7e82" stroke-width="1.1"/></svg>
<svg class="abs" style="left:61px;top:565px" width="14" height="14" viewBox="0 0 14 14"><circle cx="7" cy="7" r="2.2" fill="none" stroke="#c8c8c8" stroke-width="1.2"/><path d="M9.2 4.6 V8.3 Q9.2 9.8 10.8 9.8 Q13 9.8 13 7 A6 6 0 1 0 10 12.2" fill="none" stroke="#c8c8c8" stroke-width="1.2"/></svg>
<svg class="abs" style="left:61px;top:653px" width="14" height="14" viewBox="0 0 14 14"><circle cx="7" cy="7" r="2.2" fill="none" stroke="#c8c8c8" stroke-width="1.2"/><path d="M9.2 4.6 V8.3 Q9.2 9.8 10.8 9.8 Q13 9.8 13 7 A6 6 0 1 0 10 12.2" fill="none" stroke="#c8c8c8" stroke-width="1.2"/></svg>
</div>
<div class="box" style="left:581px;top:426px;width:448px;height:48px"></div>
<div class="box" style="left:578px;top:514px;width:532px;height:76px"></div>
<div class="box" style="left:579px;top:603px;width:769px;height:360px"></div>
<div class="note" style="left:1042px;top:441px">① 读取时，写入缓存</div>
<div class="note" style="left:1122px;top:524px">② 创建时，无需操作缓存</div>
<div class="note" style="left:1163px;top:616px">③ 更新时，删除缓存</div>
</body></html>
